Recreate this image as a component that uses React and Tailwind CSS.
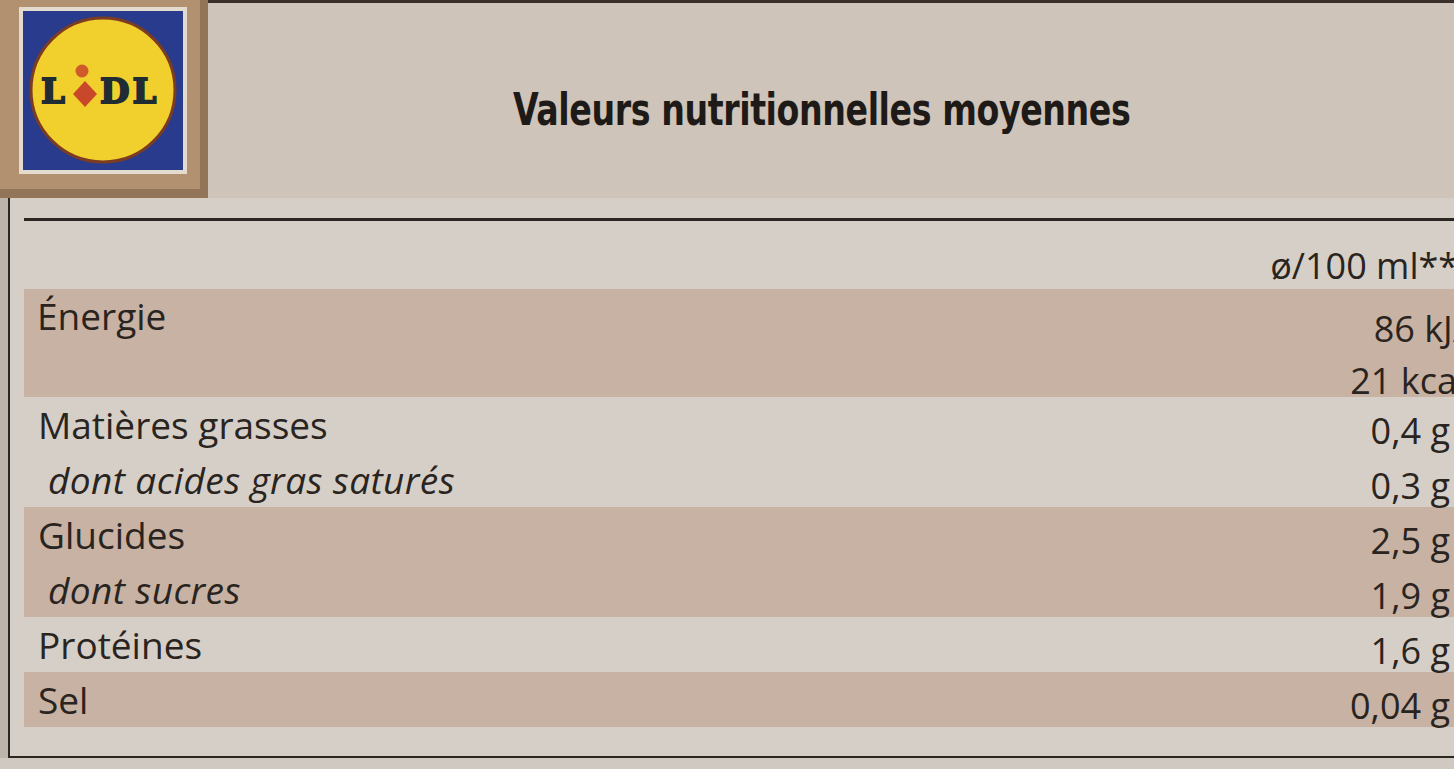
import React from 'react';

const rows = [
  { label: 'Matières grasses', value: '0,4 g', band: false },
  { label: 'dont acides gras saturés', value: '0,3 g', band: false, sub: true },
  { label: 'Glucides', value: '2,5 g', band: true },
  { label: 'dont sucres', value: '1,9 g', band: true, sub: true },
  { label: 'Protéines', value: '1,6 g', band: false },
  { label: 'Sel', value: '0,04 g', band: true },
];

function LidlLogo() {
  return (
    <svg width="208" height="198" viewBox="0 0 208 198" className="block">
      <rect x="0" y="0" width="208" height="198" fill="#b29170" />
      <rect x="200" y="0" width="8" height="198" fill="#927559" />
      <rect x="0" y="189" width="208" height="9" fill="#927559" />
      <rect x="19" y="7" width="168" height="167" fill="#e4dbcf" />
      <rect x="23" y="11" width="160" height="159" fill="#283b8c" />
      <circle cx="103" cy="90" r="72" fill="#f1cf2d" stroke="#7c3c22" strokeWidth="3" />
      <text x="41" y="103" fontFamily="'DejaVu Serif', serif" fontWeight="900" fontSize="34" fill="#1f2c33" stroke="#1f2c33" strokeWidth="1.8">L</text>
      <circle cx="82" cy="71" r="6.5" fill="#cf5a2c" />
      <polygon points="85,81 97,94 85,107 73,94" fill="#c9482a" />
      <text x="100" y="103" fontFamily="'DejaVu Serif', serif" fontWeight="900" fontSize="34" fill="#1f2c33" stroke="#1f2c33" strokeWidth="1.8" letterSpacing="3">DL</text>
    </svg>
  );
}

export default function App() {
  return (
    <div
      className="w-[1454px] h-[769px] overflow-hidden bg-[#cec4b9] flex flex-col text-[#2a2420]"
      style={{ fontFamily: "'Open Sans', 'Noto Sans', sans-serif" }}
    >
      {/* Header: logo + title */}
      <div className="flex h-[198px] shrink-0">
        <LidlLogo />
        <div className="flex-1 border-t-[3px] border-[#3a302a]">
          <h1
            className="ml-[305px] mt-[85px] w-max origin-left scale-x-[0.84] text-[44px] leading-[44px] font-bold tracking-[-0.5px] text-[#1e1a18]"
            style={{ fontFamily: "'Liberation Sans Narrow', 'DejaVu Sans Condensed', sans-serif" }}
          >
            Valeurs nutritionnelles moyennes
          </h1>
        </div>
      </div>

      {/* Table box */}
      <div className="flex shrink-0">
        <div className="w-[8px] bg-[#bdb4ab]" />
        <div className="flex-1 h-[560px] border-l-2 border-b-2 border-[#2c2622] bg-[#d6cfc7] pl-[14px] pt-[20px]">
          <div className="h-[3px] bg-[#2c2622]" />

          <div className="h-[68px] flex items-end justify-end">
            <span className="text-[36px] leading-[46px] mr-[-24px]">ø/100 ml***</span>
          </div>

          <div className="h-[108px] bg-[#c8b2a3] flex justify-between">
            <span className="pl-[13px] text-[37px] leading-[54px]">Énergie</span>
            <div className="flex flex-col items-end text-[36px] mr-[-12px] pt-[14px]">
              <span className="leading-[52px]">86 kJ/</span>
              <span className="leading-[52px]">21 kcal</span>
            </div>
          </div>

          {rows.map((r) => (
            <div
              key={r.label}
              className={`h-[55px] flex items-center justify-between ${r.band ? 'bg-[#c8b2a3]' : ''}`}
            >
              <span className={`text-[37px] leading-[55px] ${r.sub ? 'italic pl-[24px] tracking-[0.4px]' : 'pl-[14px]'}`}>
                {r.label}
              </span>
              <span className="text-[36px] leading-[55px] pr-[4px] pt-[12px]">{r.value}</span>
            </div>
          ))}
        </div>
      </div>
      <div className="flex-1 bg-[#d0c9c1]" />
    </div>
  );
}
